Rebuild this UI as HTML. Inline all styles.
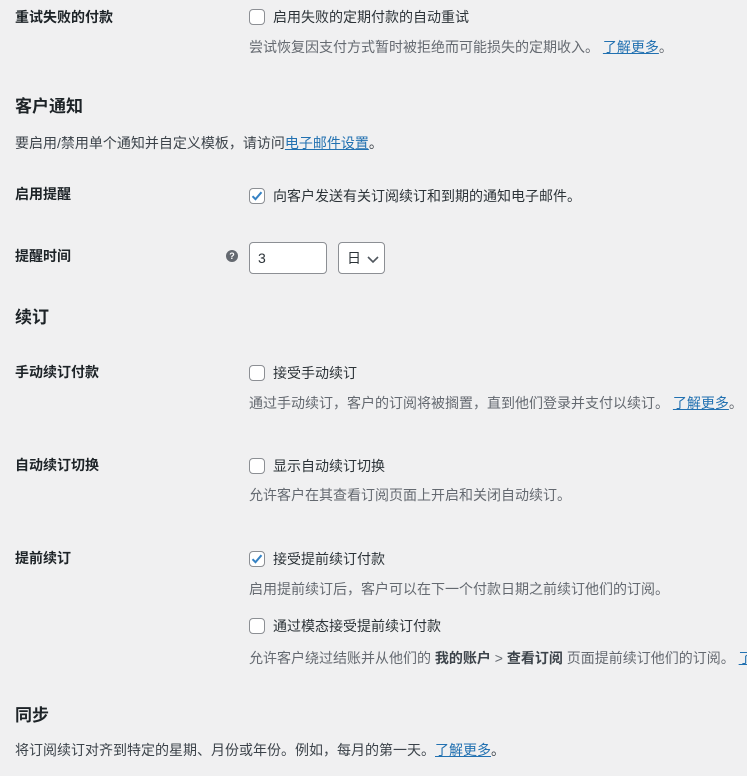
<!DOCTYPE html>
<html><head><meta charset="utf-8"><style>
body{margin:0;background:#f0f0f1;width:747px;height:776px;overflow:hidden;position:relative;font-family:"Liberation Sans","Noto Sans CJK SC",sans-serif;font-size:14px;color:#3c434a}
.a{position:absolute;white-space:nowrap;line-height:20px}
.l{font-weight:bold;color:#1d2327;left:15px}
.h{font-weight:bold;color:#1d2327;font-size:17px;left:15px;line-height:24px}
.d{color:#646970;left:249px}
.c{color:#2c3338;left:273px}
a{color:#2271b1;text-decoration:underline}
.cb{position:absolute;left:249px;width:14px;height:14px;border:1px solid #8c8f94;border-radius:4px;background:#fff}
.cb svg{position:absolute;left:-1px;top:-1px}
</style></head><body>
<div class="a l" style="top:7px">重试失败的付款</div>
<div class="cb" style="top:9px"></div>
<div class="a c" style="top:7px">启用失败的定期付款的自动重试</div>
<div class="a d" style="top:37px">尝试恢复因支付方式暂时被拒绝而可能损失的定期收入。 <a>了解更多</a>。</div>

<div class="a h" style="top:95px">客户通知</div>
<div class="a" style="left:15px;top:133px;color:#3c434a">要启用/禁用单个通知并自定义模板，请访问<a>电子邮件设置</a>。</div>

<div class="a l" style="top:184px">启用提醒</div>
<div class="cb" style="top:188px"><svg width="16" height="16" viewBox="0 0 16 16"><path d="M3.5 8.2l3 3 6-7" fill="none" stroke="#3582c4" stroke-width="2"/></svg></div>
<div class="a c" style="top:186px">向客户发送有关订阅续订和到期的通知电子邮件。</div>

<div class="a l" style="top:246px">提醒时间</div>
<div style="position:absolute;left:226px;top:250px;width:12px;height:12px;border-radius:50%;background:#646970;color:#fff;font-size:9px;font-weight:bold;text-align:center;line-height:12px">?</div>
<div style="position:absolute;left:249px;top:242px;width:78px;height:32px;border:1px solid #8c8f94;border-radius:4px;background:#fff;box-sizing:border-box;padding-left:8px;line-height:30px;color:#2c3338">3</div>
<div style="position:absolute;left:338px;top:242px;width:47px;height:32px;border:1px solid #8c8f94;border-radius:4px;background:#fff;box-sizing:border-box;padding-left:8px;line-height:30px;color:#2c3338">日<svg style="position:absolute;left:28px;top:11px" width="12" height="10" viewBox="0 0 12 10"><path d="M1 3l5 5 5-5" fill="none" stroke="#50575e" stroke-width="1.6"/></svg></div>

<div class="a h" style="top:306px">续订</div>

<div class="a l" style="top:362px">手动续订付款</div>
<div class="cb" style="top:365px"></div>
<div class="a c" style="top:363px">接受手动续订</div>
<div class="a d" style="top:393px">通过手动续订，客户的订阅将被搁置，直到他们登录并支付以续订。 <a>了解更多</a>。</div>

<div class="a l" style="top:455px">自动续订切换</div>
<div class="cb" style="top:458px"></div>
<div class="a c" style="top:456px">显示自动续订切换</div>
<div class="a d" style="top:485px">允许客户在其查看订阅页面上开启和关闭自动续订。</div>

<div class="a l" style="top:548px">提前续订</div>
<div class="cb" style="top:551px"><svg width="16" height="16" viewBox="0 0 16 16"><path d="M3.5 8.2l3 3 6-7" fill="none" stroke="#3582c4" stroke-width="2"/></svg></div>
<div class="a c" style="top:549px">接受提前续订付款</div>
<div class="a d" style="top:579px">启用提前续订后，客户可以在下一个付款日期之前续订他们的订阅。</div>
<div class="cb" style="top:618px"></div>
<div class="a c" style="top:616px">通过模态接受提前续订付款</div>
<div class="a d" style="top:648px">允许客户绕过结账并从他们的 <b style="color:#3c434a">我的账户</b> &gt; <b style="color:#3c434a">查看订阅</b> 页面提前续订他们的订阅。 <a>了解更多</a></div>

<div class="a h" style="top:704px">同步</div>
<div class="a" style="left:15px;top:740px">将订阅续订对齐到特定的星期、月份或年份。例如，每月的第一天。<a>了解更多</a>。</div>
</body></html>
